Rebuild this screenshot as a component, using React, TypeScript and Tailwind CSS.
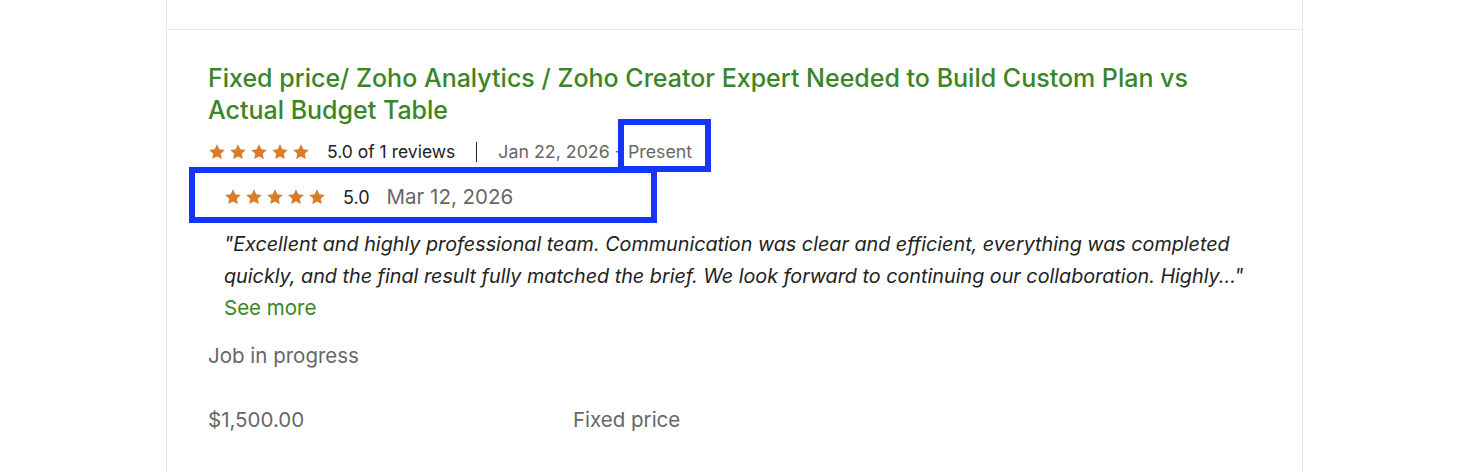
import React from "react";

const Star = () => (
  <svg viewBox="0 0 24 24" className="h-[18px] w-[18px]" fill="#d97c2b">
    <path d="M12 1.8l3.1 6.6 7.2.9-5.3 5 1.4 7.1L12 17.9l-6.4 3.5L7 14.3l-5.3-5 7.2-.9z" />
  </svg>
);

const Stars = () => (
  <div className="flex items-center gap-[3px]">
    {[0, 1, 2, 3, 4].map((i) => (
      <Star key={i} />
    ))}
  </div>
);

export default function App() {
  return (
    <div className="relative min-h-[472px] bg-white font-['Inter','Liberation_Sans',sans-serif] text-[#222]">
      <div className="ml-[166px] min-h-[472px] w-[1137px] border-x border-[#e9e9e9]">
        <div className="h-[30px] border-b border-[#e9e9e9]" />
        <div className="pl-[41px] pr-[42px] pt-[32px]">
          <h3 className="text-[25px] font-medium leading-[32px] text-[#3b8527]">
            Fixed price/ Zoho Analytics / Zoho Creator Expert Needed to Build Custom Plan vs Actual Budget Table
          </h3>

          <div className="mt-[14px] flex h-[24px] items-center">
            <Stars />
            <span className="ml-[17px] text-[17.5px]">5.0 of 1 reviews</span>
            <span className="mx-[21px] h-[20px] w-px bg-[#222]" />
            <span className="text-[17.8px] text-[#676767]">Jan 22, 2026 - Present</span>
          </div>

          <div className="mt-[21px] flex h-[24px] items-center pl-[16px]">
            <Stars />
            <span className="ml-[17px] text-[18px]">5.0</span>
            <span className="ml-[17px] text-[20.5px] text-[#676767]">Mar 12, 2026</span>
          </div>

          <div className="mt-[19px] pl-[16px]">
            <p className="text-[19.75px] italic leading-[32px] text-[#222]">
              "Excellent and highly professional team. Communication was clear and efficient, everything was completed quickly, and the final result fully matched the brief. We look forward to continuing our collaboration. Highly..."
            </p>
            <button className="text-[20.5px] leading-[32px] text-[#3b8527]">See more</button>
          </div>

          <div className="mt-[20px] text-[20.5px] leading-[24px] text-[#676767]">Job in progress</div>

          <div className="mt-[40px] grid grid-cols-[365px_1fr] text-[20.5px] leading-[24px] text-[#676767]">
            <span>$1,500.00</span>
            <span>Fixed price</span>
          </div>
        </div>
      </div>

      <div className="absolute left-[618px] top-[119px] h-[53px] w-[93px] border-[6px] border-[#1535fa]" />
      <div className="absolute left-[189px] top-[167px] h-[56px] w-[468px] border-[6px] border-[#1535fa]" />
    </div>
  );
}
